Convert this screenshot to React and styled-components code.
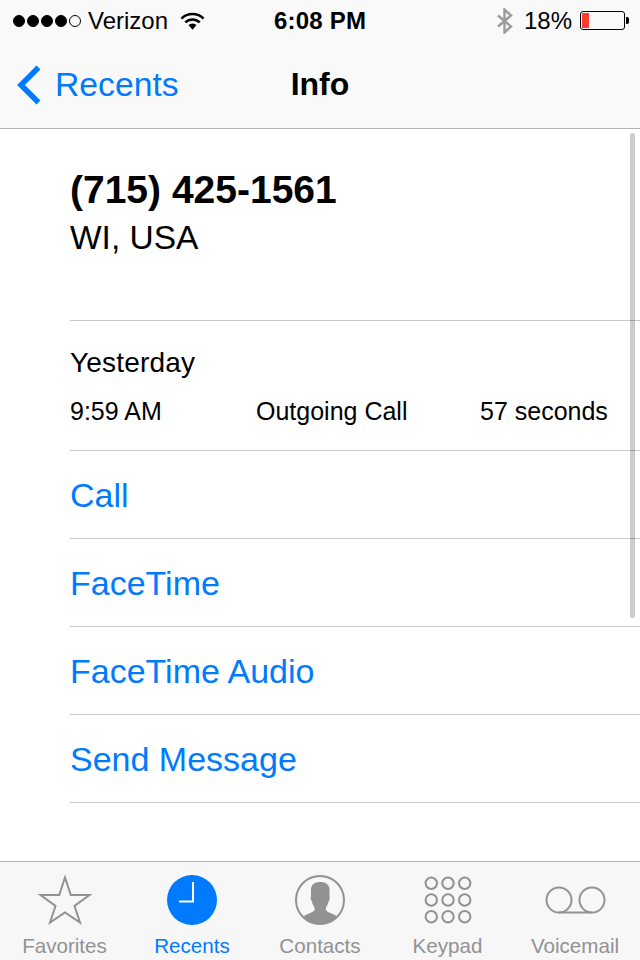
import React from "react"
import styled, { createGlobalStyle } from "styled-components"

const BLUE = "#007aff"
const GRAY = "#929292"

const GlobalStyle = createGlobalStyle`
  html, body {
    margin: 0;
    padding: 0;
    background: #fff;
  }
  * {
    box-sizing: border-box;
  }
`

const Screen = styled.div`
  width: 640px;
  height: 960px;
  display: flex;
  flex-direction: column;
  position: relative;
  overflow: hidden;
  font-family: "Liberation Sans", Arial, sans-serif;
  color: #000;
`

const Header = styled.header`
  height: 129px;
  flex: none;
  background: #f9f9f9;
  border-bottom: 1px solid #b2b2b2;
`

const StatusBar = styled.div`
  height: 41px;
  display: flex;
  align-items: center;
  justify-content: space-between;
  padding: 0 11px 0 13px;
  font-size: 24px;
  position: relative;
`

const StatusGroup = styled.div`
  display: flex;
  align-items: center;
`

const Signal = styled.div`
  display: flex;
  gap: 2px;
  margin-right: 7px;
`

const Dot = styled.span`
  width: 12px;
  height: 12px;
  border-radius: 50%;
  border: 1px solid #000;
  background: ${(p) => (p.$on ? "#000" : "transparent")};
`

const Clock = styled.div`
  position: absolute;
  left: 274px;
  top: 7px;
  font-size: 24px;
  font-weight: 700;
  letter-spacing: 0.2px;
`

const Percent = styled.span`
  margin: 0 8px 0 10px;
`

const Battery = styled.div`
  width: 45px;
  height: 19px;
  margin-right: 4px;
  border: 1px solid #000;
  border-radius: 3px;
  padding: 1px;
  position: relative;
  &::after {
    content: "";
    position: absolute;
    right: -5px;
    top: 5px;
    width: 3px;
    height: 7px;
    background: #000;
    border-radius: 0 2px 2px 0;
  }
`

const BatteryFill = styled.div`
  height: 100%;
  background: #ff3b30;
`

const NavBar = styled.div`
  height: 87px;
  display: flex;
  align-items: center;
  position: relative;
  padding-left: 16px;
`

const BackLink = styled.div`
  display: flex;
  align-items: center;
  gap: 13px;
  color: ${BLUE};
  font-size: 33.7px;
`

const NavTitle = styled.div`
  position: absolute;
  left: 0;
  right: 0;
  text-align: center;
  font-size: 32px;
  font-weight: 700;
`

const Content = styled.main`
  flex: 1;
  background: #fff;
  padding-left: 70px;
  position: relative;
`

const ContactBlock = styled.section`
  height: 192px;
  padding-top: 37px;
  border-bottom: 1px solid #c8c7cc;
`

const PhoneNumber = styled.div`
  font-size: 39px;
  line-height: 48px;
  font-weight: 700;
`

const Region = styled.div`
  font-size: 33.5px;
  line-height: 48px;
`

const CallBlock = styled.section`
  height: 130px;
  padding-top: 24px;
  border-bottom: 1px solid #c8c7cc;
`

const CallDay = styled.div`
  font-size: 28px;
  line-height: 36px;
  letter-spacing: 0.2px;
`

const CallRow = styled.div`
  display: grid;
  grid-template-columns: 186px 224px auto;
  margin-top: 16px;
  font-size: 25px;
  line-height: 28px;
`

const ActionRow = styled.div`
  height: 88px;
  display: flex;
  align-items: center;
  padding-top: 2px;
  color: ${BLUE};
  font-size: 34px;
  border-bottom: 1px solid #c8c7cc;
`

const Scrollbar = styled.div`
  position: absolute;
  right: 5px;
  top: 4px;
  width: 5px;
  height: 485px;
  border-radius: 3px;
  background: rgba(0, 0, 0, 0.2);
`

const TabBar = styled.nav`
  height: 99px;
  flex: none;
  display: grid;
  grid-template-columns: 129px 126px 130px 125px 130px;
  background: #f7f7f8;
  border-top: 1px solid #b2b2b2;
`

const Tab = styled.div`
  display: flex;
  flex-direction: column;
  align-items: center;
  color: ${(p) => (p.$active ? BLUE : GRAY)};
  font-size: 20.6px;
`

const TabIcon = styled.div`
  height: 60px;
  margin-top: 8px;
  display: flex;
  align-items: center;
  justify-content: center;
`

const TabLabel = styled.span`
  margin-top: 4px;
  line-height: 24px;
`

const Wifi = () => (
  <svg width="25" height="20" viewBox="0 0 26 20" style={{ marginLeft: 12 }}>
    <path d="M1.5 7.5a16.5 16.5 0 0 1 23 0" fill="none" stroke="#000" strokeWidth="2.6" />
    <path d="M5.5 11.5a10.5 10.5 0 0 1 15 0" fill="none" stroke="#000" strokeWidth="2.6" />
    <path d="M8.8 14.2a6 6 0 0 1 8.4 0L13 19z" fill="#000" />
  </svg>
)

const Bluetooth = () => (
  <svg width="18" height="26" viewBox="0 0 18 26">
    <path d="M2 7.500l13 11-6.500 6V1.500l6.500 6-13 11" fill="none" stroke="#9b9b9b" strokeWidth="2.400" />
  </svg>
)

const Chevron = () => (
  <svg width="26" height="40" viewBox="0 0 26 40">
    <path d="M22.500 2.500L5 20l17.500 17.500" fill="none" stroke={BLUE} strokeWidth="5.500" />
  </svg>
)

const Star = () => (
  <svg width="56" height="52" viewBox="0 0 56 52">
    <path
      d="M28 3.500L33.800 21H52.500L37.500 32 43 48.500 28 38.500 13 48.500 18.500 32 3.500 21H22.200z"
      fill="none"
      stroke={GRAY}
      strokeWidth="2"
    />
  </svg>
)

const RecentsClock = () => (
  <svg width="50" height="50" viewBox="0 0 50 50">
    <circle cx="25" cy="25" r="25" fill={BLUE} />
    <path d="M26 7v19.500H12" fill="none" stroke="#fff" strokeWidth="2" />
  </svg>
)

const ContactIcon = () => (
  <svg width="50" height="50" viewBox="0 0 50 50">
    <defs>
      <clipPath id="contact-clip">
        <circle cx="25" cy="25" r="24" />
      </clipPath>
    </defs>
    <g clipPath="url(#contact-clip)" fill={GRAY}>
      <path d="M25 7c6 0 9.500 2.500 9.500 8v6c0 1 .5 1.500 .2 3-.3 1.500-1 2-1.200 3-.5 2-1.500 4-2.500 5.500-.4 2 0 3.500 2 4.500l7 3 3.500 3v8H7v-8l3.500-3 7-3c2-1 2.400-2.500 2-4.500-1-1.500-2-3.500-2.500-5.500-.2-1-.9-1.500-1.200-3-.3-1.500 .2-2 .2-3v-6c0-5.500 3.500-8 9.500-8z" />
    </g>
    <circle cx="25" cy="25" r="24" fill="none" stroke={GRAY} strokeWidth="2" />
  </svg>
)

const KeypadIcon = () => (
  <svg width="50" height="50" viewBox="0 0 50 50">
    {[0, 1, 2].map((row) =>
      [0, 1, 2].map((col) => (
        <circle
          key={`${row}-${col}`}
          cx={8.300 + col * 16.700}
          cy={8.300 + row * 16.700}
          r="5.700"
          fill="none"
          stroke={GRAY}
          strokeWidth="2"
        />
      ))
    )}
  </svg>
)

const VoicemailIcon = () => (
  <svg width="61" height="30" viewBox="0 0 61 30">
    <circle cx="14" cy="15" r="12.500" fill="none" stroke={GRAY} strokeWidth="2" />
    <circle cx="47" cy="15" r="12.500" fill="none" stroke={GRAY} strokeWidth="2" />
    <path d="M14 27.500h33" fill="none" stroke={GRAY} strokeWidth="2" />
  </svg>
)

const tabs = [
  { label: "Favorites", icon: <Star /> },
  { label: "Recents", icon: <RecentsClock />, active: true },
  { label: "Contacts", icon: <ContactIcon /> },
  { label: "Keypad", icon: <KeypadIcon /> },
  { label: "Voicemail", icon: <VoicemailIcon /> },
]

const actions = ["Call", "FaceTime", "FaceTime Audio", "Send Message"]

const App = () => (
  <>
    <GlobalStyle />
    <Screen>
      <Header>
        <StatusBar>
          <StatusGroup>
            <Signal>
              {[1, 1, 1, 1, 0].map((on, i) => (
                <Dot key={i} $on={on} />
              ))}
            </Signal>
            <span>Verizon</span>
            <Wifi />
          </StatusGroup>
          <Clock>6:08 PM</Clock>
          <StatusGroup>
            <Bluetooth />
            <Percent>18%</Percent>
            <Battery>
              <BatteryFill style={{ width: "18%" }} />
            </Battery>
          </StatusGroup>
        </StatusBar>
        <NavBar>
          <BackLink>
            <Chevron />
            <span>Recents</span>
          </BackLink>
          <NavTitle>Info</NavTitle>
        </NavBar>
      </Header>
      <Content>
        <ContactBlock>
          <PhoneNumber>(715) 425-1561</PhoneNumber>
          <Region>WI, USA</Region>
        </ContactBlock>
        <CallBlock>
          <CallDay>Yesterday</CallDay>
          <CallRow>
            <span>9:59 AM</span>
            <span>Outgoing Call</span>
            <span>57 seconds</span>
          </CallRow>
        </CallBlock>
        {actions.map((a) => (
          <ActionRow key={a}>{a}</ActionRow>
        ))}
        <Scrollbar />
      </Content>
      <TabBar>
        {tabs.map((t) => (
          <Tab key={t.label} $active={t.active}>
            <TabIcon>{t.icon}</TabIcon>
            <TabLabel>{t.label}</TabLabel>
          </Tab>
        ))}
      </TabBar>
    </Screen>
  </>
)

export default App
